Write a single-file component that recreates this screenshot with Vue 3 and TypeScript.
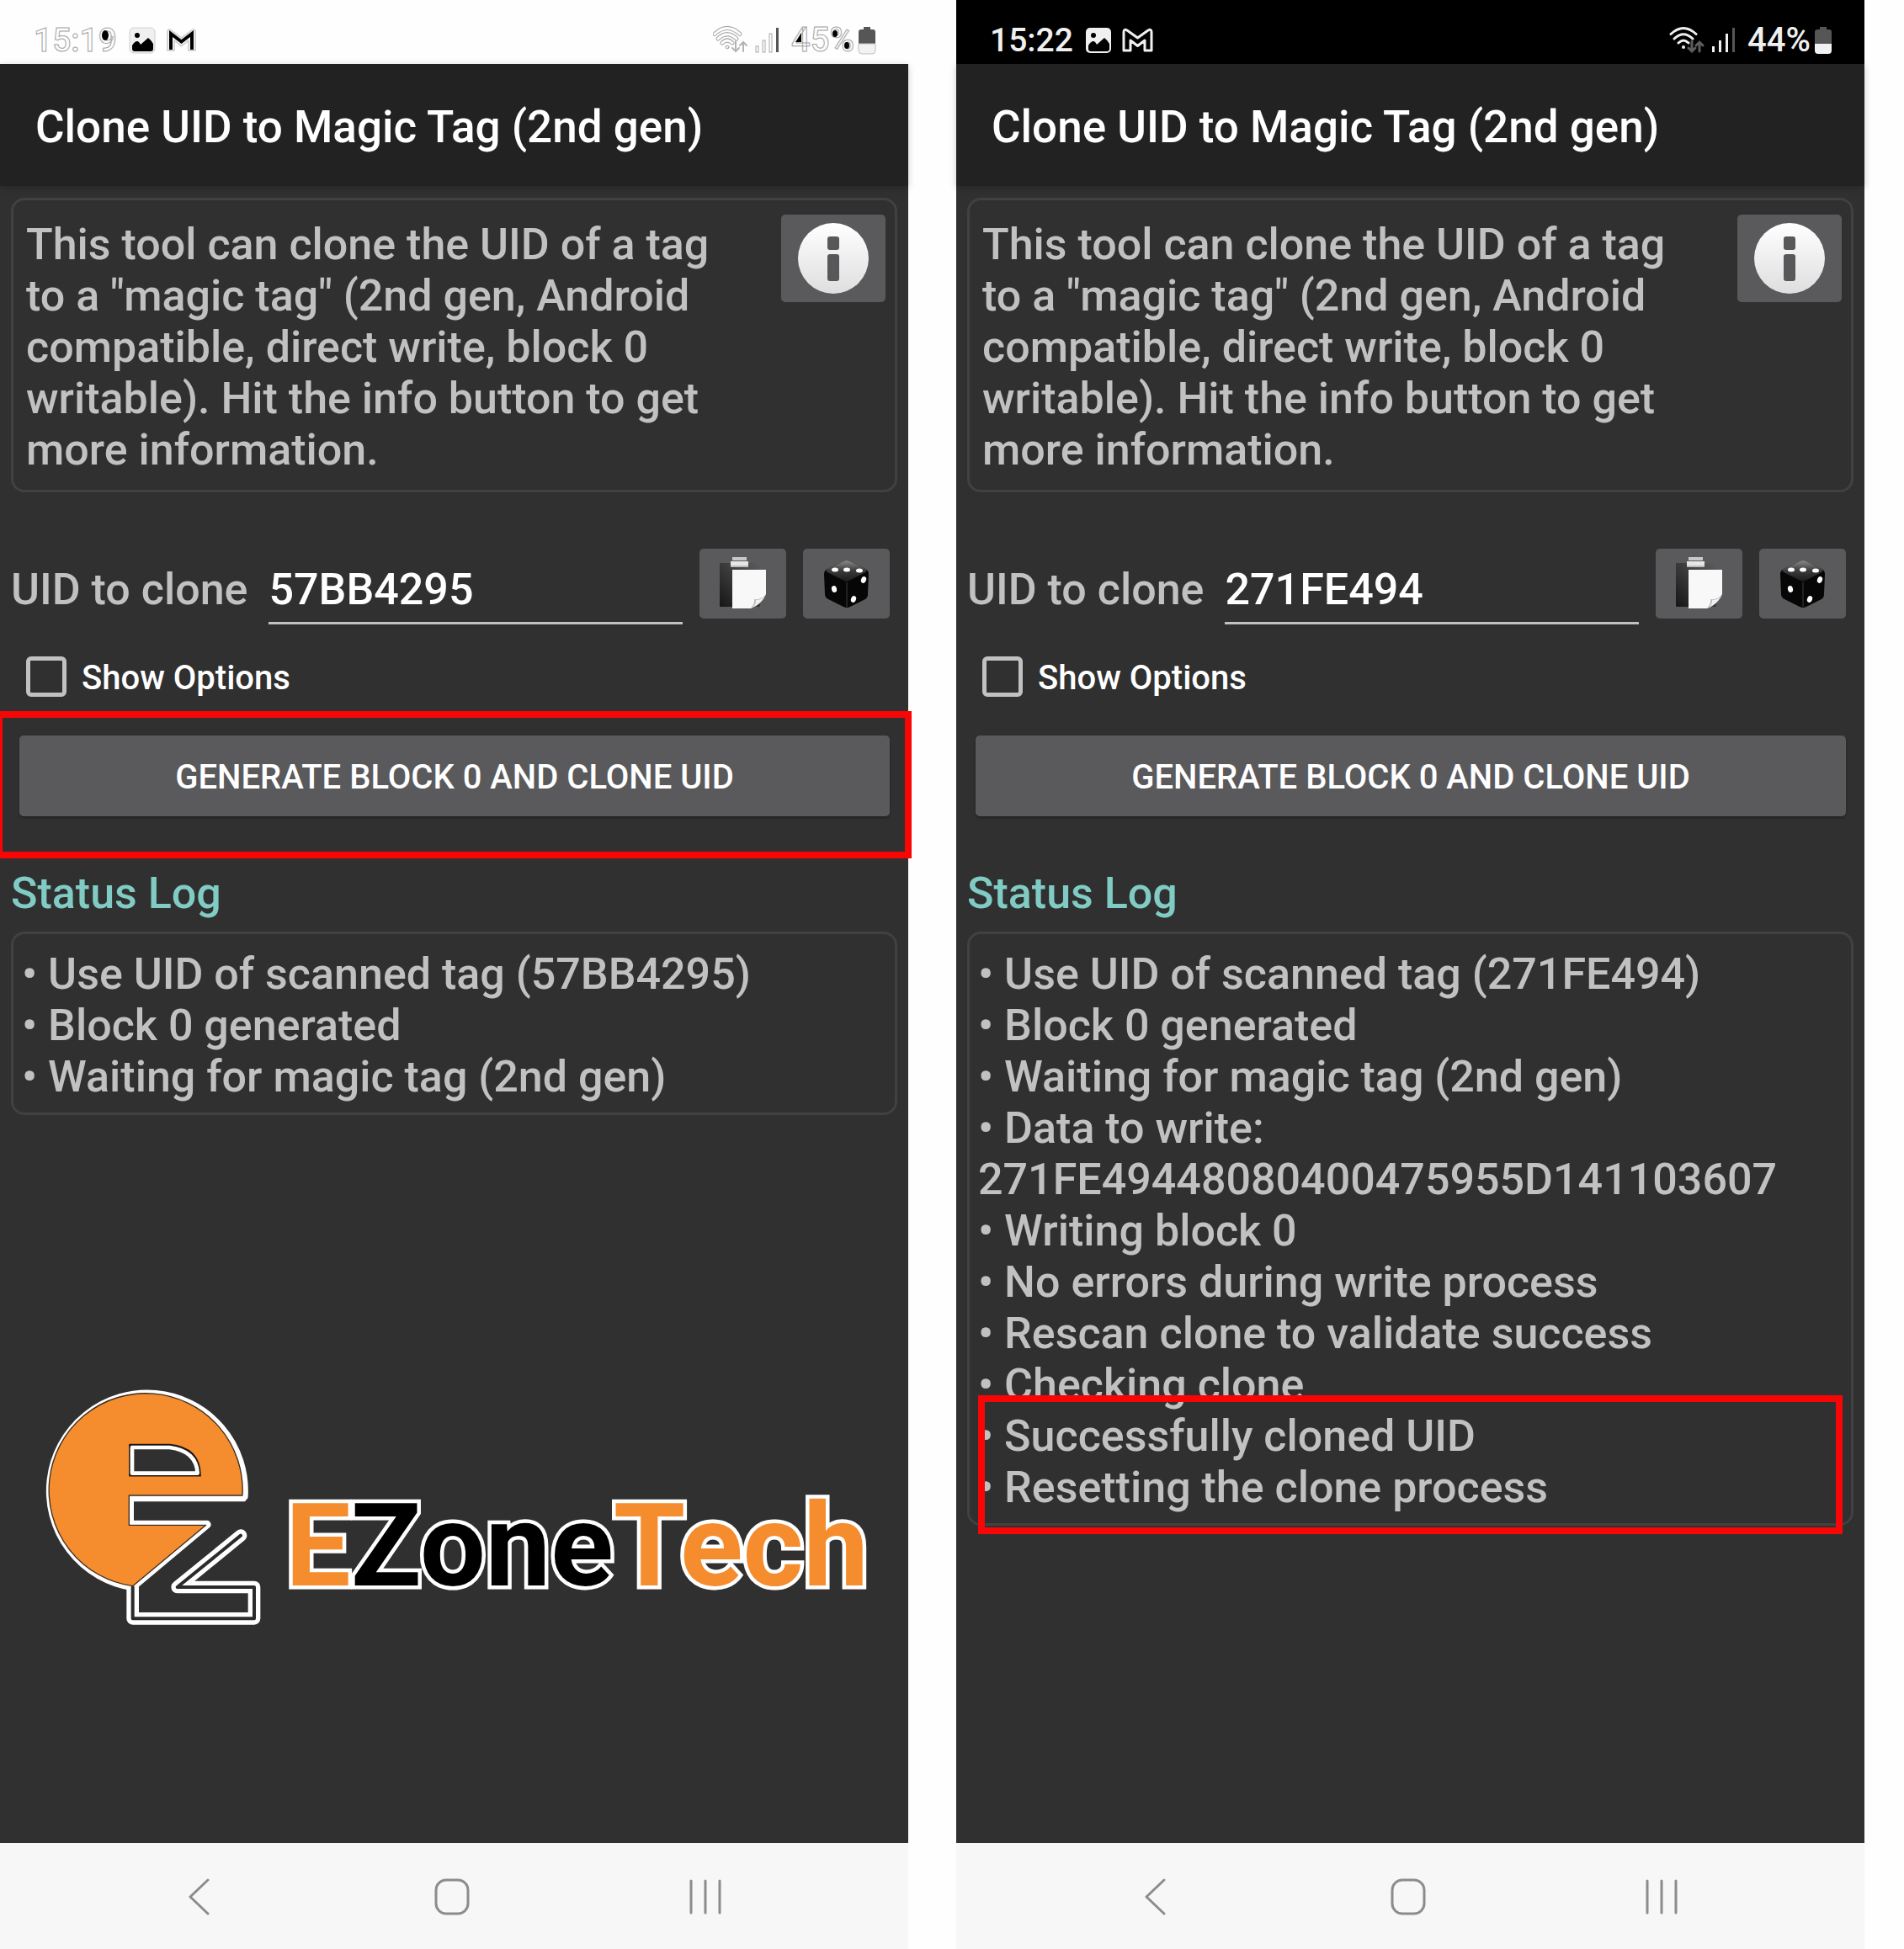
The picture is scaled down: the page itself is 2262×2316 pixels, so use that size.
<script setup lang="ts">
import { ref } from 'vue'

interface Screen {
  id: string
  theme: 'light' | 'dark'
  time: string
  battery: string
  uid: string
  log: string[]
  highlight: 'action' | 'log'
  watermark: boolean
}

const screens = ref<Screen[]>([
  {
    id: 'before',
    theme: 'light',
    time: '15:19',
    battery: '45%',
    uid: '57BB4295',
    log: ['Use UID of scanned tag (57BB4295)', 'Block 0 generated', 'Waiting for magic tag (2nd gen)'],
    highlight: 'action',
    watermark: true,
  },
  {
    id: 'after',
    theme: 'dark',
    time: '15:22',
    battery: '44%',
    uid: '271FE494',
    log: [
      'Use UID of scanned tag (271FE494)',
      'Block 0 generated',
      'Waiting for magic tag (2nd gen)',
      'Data to write:\n271FE49448080400475955D141103607',
      'Writing block 0',
      'No errors during write process',
      'Rescan clone to validate success',
      'Checking clone',
      'Successfully cloned UID',
      'Resetting the clone process',
    ],
    highlight: 'log',
    watermark: false,
  },
])
</script>

<template>
  <main class="page">
    <section v-for="s in screens" :key="s.id" class="phone">
      <div class="status" :class="s.theme">
        <span class="status-text time">
          {{ s.time }}
          <svg v-if="s.theme === 'light'" class="counters" width="100" height="48" viewBox="0 0 100 48">
            <ellipse cx="85" cy="18" rx="4" ry="6" />
          </svg>
        </span>
        <svg class="picture" width="32" height="32" viewBox="0 0 32 32">
          <rect class="frame" x="1" y="1" width="30" height="30" rx="5" />
          <circle class="ink" cx="10" cy="10" r="3" />
          <path class="ink" d="M4 22q3-5 6-5 2 0 4 4l9-8q4 3 6 7v6q0 3-3 3H7q-3 0-3-3z" />
        </svg>
        <svg class="mail" width="37" height="30" viewBox="0 0 37 30">
          <path class="m-outer" d="M2 27V5q0-4 4-2l12.500 9L31 3q4-2 4 2v22h-8V15l-8.500 6.500L10 15v12z" />
          <path class="m-inner" d="M6 26V7l12.500 9.500L31 7v19" />
        </svg>
        <span class="spacer"></span>
        <svg class="wifi" width="43" height="34" viewBox="0 0 43 34">
          <g class="arc-back">
            <path d="M2 9.500Q17-4.500 32 9.500M6 15Q17 4.500 28 15M11 20Q17 14 23 20" />
          </g>
          <g class="arc">
            <path d="M2 9.500Q17-4.500 32 9.500M6 15Q17 4.500 28 15M11 20Q17 14 23 20" />
          </g>
          <circle class="dot" cx="17" cy="25" r="2" />
          <path class="updown" d="M27 18v12M23 26l4 4 4-4M36 30V19M32 23l4-4 4 4" />
        </svg>
        <svg class="signal" width="29" height="34" viewBox="0 0 29 34">
          <rect class="bar" x="1" y="24" width="3" height="7" />
          <rect class="bar" x="9" y="17" width="3" height="14" />
          <rect class="bar" x="17" y="9" width="3" height="22" />
          <rect class="bar-off" x="25" y="2" width="3" height="29" />
        </svg>
        <span class="status-text percent">
          {{ s.battery }}
          <svg v-if="s.theme === 'light'" class="counters" width="80" height="48" viewBox="0 0 80 48">
            <path d="M12 15v11H5z" />
            <ellipse cx="52" cy="16" rx="3" ry="4" />
            <ellipse cx="66" cy="30" rx="3" ry="4" />
          </svg>
        </span>
        <svg class="battery" width="22" height="34" viewBox="0 0 22 34">
          <path class="cell" d="M7 1h8v3h3q3 0 3 3v14H1V7q0-3 3-3h3z" />
          <path class="charge" d="M1 21h20v8q0 4-4 4H5q-4 0-4-4z" />
        </svg>
      </div>

      <header class="appbar"><h1>Clone UID to Magic Tag (2nd gen)</h1></header>

      <div class="content">
        <div class="panel intro">
          <p>
            This tool can clone the UID of a tag to a "magic tag" (2nd gen, Android compatible, direct
            write, block 0 writable). Hit the info button to get more information.
          </p>
          <button type="button" class="tile info" aria-label="Info">
            <svg width="84" height="84" viewBox="0 0 84 84">
              <defs>
                <linearGradient :id="`disc-${s.id}`" x1="0" y1="0" x2="0" y2="1">
                  <stop offset="0" stop-color="#ffffff" />
                  <stop offset="1" stop-color="#dedede" />
                </linearGradient>
              </defs>
              <circle cx="42" cy="42" r="42" :fill="`url(#disc-${s.id})`" />
              <rect x="35" y="16" width="14" height="16" rx="3" fill="#58585b" />
              <rect x="35" y="37" width="14" height="32" rx="3" fill="#58585b" />
            </svg>
          </button>
        </div>

        <div class="uid-row">
          <label :for="`uid-${s.id}`">UID to clone</label>
          <input :id="`uid-${s.id}`" v-model="s.uid" type="text" class="uid" />
          <button type="button" class="tile tool" aria-label="Paste">
            <svg width="103" height="83" viewBox="0 0 103 83">
              <defs>
                <linearGradient :id="`board-${s.id}`" x1="0" y1="1" x2="1" y2="0">
                  <stop offset="0" stop-color="#161616" />
                  <stop offset="1" stop-color="#5c5c5c" />
                </linearGradient>
              </defs>
              <rect x="24" y="17" width="48" height="52" rx="1" :fill="`url(#board-${s.id})`" />
              <path d="M39 10h17v4H39z" fill="#c8c8c8" />
              <path d="M37 15h21v7H37z" fill="#e6e6e6" />
              <path d="M37 20h21v2H37z" fill="#bdbdbd" />
              <path d="M39 25h40v29q-6 13-18 17H39z" fill="#f8f8f8" />
              <path d="M79 54q-3 10-18 17 5-6 4-11 9 1 14-6z" fill="#bcbcbc" />
              <path d="M77 57q-4 8-13 12 4-5 3-8 6 0 10-4z" fill="#f1f1f1" />
            </svg>
          </button>
          <button type="button" class="tile tool" aria-label="Random UID">
            <svg width="103" height="83" viewBox="0 0 103 83">
              <defs>
                <linearGradient :id="`top-${s.id}`" x1="0" y1="0" x2="0" y2="1">
                  <stop offset="0" stop-color="#8a8a8a" />
                  <stop offset="0.500" stop-color="#3a3a3a" />
                  <stop offset="1" stop-color="#1a1a1a" />
                </linearGradient>
              </defs>
              <path
                d="M48 15q4-2 8 0l18 9q4 2 4 6l-1 24q0 4-3 6L56 69q-4 2-8 0L30 60q-4-2-4-6l-1-24q0-4 4-6z"
                fill="#060606"
              />
              <path d="M48 15q4-2 8 0l18 9q3 2 0 4L55 38q-3 2-6 0L29 28q-3-2 0-4z" :fill="`url(#top-${s.id})`" />
              <path d="M52 40v29" stroke="#3c3c3c" stroke-width="1" />
              <g fill="#fff">
                <ellipse cx="38" cy="25" rx="4" ry="2.500" />
                <ellipse cx="52" cy="25" rx="4" ry="2.500" />
                <ellipse cx="67" cy="26" rx="4" ry="2.500" />
                <ellipse cx="37" cy="48" rx="3" ry="4" transform="rotate(-15 37 48)" />
                <ellipse cx="72" cy="37" rx="3" ry="4" transform="rotate(20 72 37)" />
                <ellipse cx="60" cy="60" rx="3" ry="4" transform="rotate(20 60 60)" />
              </g>
            </svg>
          </button>
        </div>

        <div class="option">
          <input :id="`opt-${s.id}`" type="checkbox" />
          <label :for="`opt-${s.id}`">Show Options</label>
        </div>

        <div class="action">
          <button type="button" class="generate">GENERATE BLOCK 0 AND CLONE UID</button>
          <div v-if="s.highlight === 'action'" class="mark mark-action"></div>
        </div>

        <h2>Status Log</h2>
        <div class="panel log">
          <ul>
            <li v-for="line in s.log" :key="line">• {{ line }}</li>
          </ul>
          <div v-if="s.highlight === 'log'" class="mark mark-log"></div>
        </div>

        <div v-if="s.watermark" class="watermark">
          <svg class="emblem" width="263" height="283" viewBox="60 60 789 849">
            <g stroke-linejoin="round" stroke-linecap="round">
              <path
                d="M389 768A347 347 0 1 1 787 445H378V545H655L389 768Z"
                fill="#f58d2f"
                stroke="#fff"
                stroke-width="26"
              />
              <path
                d="M389 768V880H822V768H548L774 584"
                fill="none"
                stroke="#fff"
                stroke-width="44"
              />
              <path d="M389 768V880H822V768H548L774 584" fill="none" stroke="#2b2b2b" stroke-width="12" />
              <path
                d="M389 764A345 345 0 1 1 780 441H376V547H650L389 764Z"
                fill="#f58d2f"
                stroke="#3a2c20"
                stroke-width="4"
              />
              <path d="M386 456H786M386 456V537H655" fill="none" stroke="#fff" stroke-width="14" />
              <path d="M378 260H520Q630 270 630 371H378Z" fill="#303030" stroke="#1c1610" stroke-width="5" />
              <path d="M387 270H520Q616 282 620 362H387Z" fill="#303030" stroke="#fff" stroke-width="14" />
            </g>
          </svg>
          <span class="wordmark"><b class="amber">E</b><b class="ink">Zone</b><b class="amber">Tech</b></span>
        </div>
      </div>

      <nav class="nav">
        <button type="button" aria-label="Back">
          <svg width="28" height="44" viewBox="0 0 28 44"><path d="M25 2 4 22l21 20" /></svg>
        </button>
        <button type="button" aria-label="Home">
          <svg width="44" height="44" viewBox="0 0 44 44"><rect x="3" y="2" width="38" height="40" rx="12" /></svg>
        </button>
        <button type="button" aria-label="Recents">
          <svg width="40" height="44" viewBox="0 0 40 44"><path d="M3 3v38M20 3v38M37 3v38" /></svg>
        </button>
      </nav>
    </section>
  </main>
</template>

<style>
body {
  margin: 0;
  background: #fefefe;
}
</style>

<style scoped>
.page {
  display: grid;
  grid-template-columns: 1fr 1fr;
  gap: 57px;
  box-sizing: border-box;
  min-height: 100vh;
  padding-right: 47px;
  font-family: Roboto, "Liberation Sans", sans-serif;
  font-weight: 500;
}
.phone {
  display: flex;
  flex-direction: column;
  min-width: 0;
  background: #303030;
}
h1,
h2,
p,
ul {
  margin: 0;
  padding: 0;
  font-weight: 500;
}
button,
input {
  margin: 0;
  padding: 0;
  border: 0;
  font: inherit;
  color: inherit;
}
svg {
  display: block;
  flex: none;
}

/* status bar */
.status {
  display: flex;
  align-items: center;
  box-sizing: border-box;
  height: 76px;
  padding: 20px 38px 0 40px;
}
.status.light {
  background: #fefefe;
}
.status.dark {
  background: #000;
}
.status-text {
  position: relative;
  font-size: 40px;
  line-height: 48px;
  color: #f0f0f0;
}
.time {
  font-size: 39px;
}
.light .status-text {
  color: #fdfdfd;
  -webkit-text-stroke: 1px #a4a4a4;
}
.counters {
  position: absolute;
  left: 0;
  top: 0;
  fill: #000;
}
.picture {
  margin-left: 14px;
}
.mail {
  margin-left: 12px;
}
.spacer {
  flex: 1;
}
.signal {
  margin-left: 7px;
}
.percent {
  margin-left: 14px;
}
.battery {
  margin-left: 4px;
}
.frame {
  fill: #f0f0f0;
}
.light .frame {
  stroke: #d0d0d0;
}
.picture .ink {
  fill: #000;
}
.m-outer {
  fill: none;
  stroke: #f0f0f0;
  stroke-width: 3;
  stroke-linejoin: round;
}
.m-inner {
  fill: none;
  stroke: none;
}
.light .m-outer {
  fill: #fdfdfd;
  stroke: #d4d4d4;
  stroke-width: 2;
}
.light .m-inner {
  stroke: #000;
  stroke-width: 4;
}
.wifi {
  fill: none;
  stroke-linecap: round;
}
.arc {
  stroke: #f0f0f0;
  stroke-width: 3;
}
.light .arc-back {
  stroke: #a8a8a8;
  stroke-width: 5;
}
.light .arc {
  stroke: #fefefe;
}
.dot {
  fill: #f0f0f0;
}
.light .dot {
  stroke: #a8a8a8;
}
.updown {
  stroke: #5c5c5c;
  stroke-width: 3;
}
.light .updown {
  stroke: #b4b4b4;
  stroke-width: 2;
}
.bar {
  fill: #f0f0f0;
}
.light .bar {
  fill: #fefefe;
  stroke: #a8a8a8;
}
.bar-off,
.cell {
  fill: #565656;
}
.charge {
  fill: #f2f2f2;
}
.light .charge {
  stroke: #c0c0c0;
}

/* title */
.appbar {
  display: flex;
  align-items: center;
  box-sizing: border-box;
  height: 145px;
  padding: 4px 42px 0;
  background: #222;
  box-shadow: 0 2px 8px rgba(0, 0, 0, 0.2);
}
h1 {
  font-size: 53px;
  line-height: 64px;
  color: #fff;
}

/* form */
.content {
  padding: 14px 13px 0;
  font-size: 52px;
  line-height: 61px;
  color: #c1c1c1;
}
.panel {
  position: relative;
  border: 3px solid #414141;
  border-radius: 16px;
}
.intro {
  display: flex;
  justify-content: space-between;
  align-items: flex-start;
  gap: 40px;
  padding: 22px 11px 17px 15px;
}
.tile {
  flex: none;
  display: flex;
  align-items: center;
  justify-content: center;
  background: #5a5a5d;
  border-radius: 5px;
}
.info {
  width: 124px;
  height: 104px;
  margin-top: -5px;
}
.uid-row {
  display: flex;
  align-items: flex-start;
  gap: 20px;
  margin: 67px 9px 0 0;
}
.uid-row label {
  flex: none;
  padding: 18px 5px 0 0;
}
.uid {
  flex: 1;
  min-width: 0;
  height: 61px;
  padding: 18px 0 8px;
  background: none;
  border-bottom: 3px solid #c1c1c1;
  border-radius: 0;
  color: #fff;
  outline: none;
}
.tool {
  width: 103px;
  height: 83px;
}
.option {
  display: flex;
  align-items: center;
  gap: 18px;
  margin: 38px 18px 0;
  font-size: 40px;
  line-height: 44px;
  color: #fff;
}
.option label {
  padding-top: 4px;
}
.option input {
  appearance: none;
  flex: none;
  box-sizing: border-box;
  width: 48px;
  height: 48px;
  border: 5px solid #c1c1c1;
  border-radius: 6px;
}
.action {
  position: relative;
  margin: 46px 9px 61px 10px;
}
.generate {
  display: block;
  width: 100%;
  height: 96px;
  padding-top: 4px;
  background: #5a5a5d;
  border-radius: 5px;
  box-shadow: 0 2px 3px rgba(0, 0, 0, 0.3);
  font-size: 40px;
  line-height: 48px;
  color: #fff;
}
.mark {
  position: absolute;
  border: 8px solid #f80505;
  pointer-events: none;
}
.mark-action {
  inset: -29px -26px -50px -28px;
  z-index: 1;
}
.mark-log {
  left: 10px;
  right: 10px;
  bottom: -13px;
  height: 149px;
}
h2 {
  font-size: 52px;
  line-height: 61px;
  color: #80cbc4;
}
.log {
  margin-top: 15px;
  padding: 17px 10px 12px;
}
li {
  list-style: none;
  white-space: pre-line;
}

/* brand */
.watermark {
  display: flex;
  align-items: flex-end;
  gap: 28px;
  margin: 325px 0 0 35px;
}
.wordmark {
  margin-bottom: 27px;
  font-family: Roboto, "Liberation Sans", sans-serif;
  font-size: 138px;
  line-height: 138px;
  white-space: nowrap;
  -webkit-text-stroke: 9px #fff;
  paint-order: stroke fill;
}
.wordmark .amber {
  color: #f58d2f;
}
.wordmark .ink {
  color: #000;
}

/* system navigation */
.nav {
  display: flex;
  justify-content: center;
  box-sizing: border-box;
  height: 126px;
  margin-top: auto;
  padding: 2px 5px 0 0;
  background: #f7f7f7;
}
.nav button {
  display: flex;
  align-items: center;
  justify-content: center;
  width: 28%;
  background: none;
}
.nav svg {
  fill: none;
  stroke: #8c8c8c;
  stroke-width: 3;
  stroke-linecap: round;
  stroke-linejoin: round;
}
</style>
